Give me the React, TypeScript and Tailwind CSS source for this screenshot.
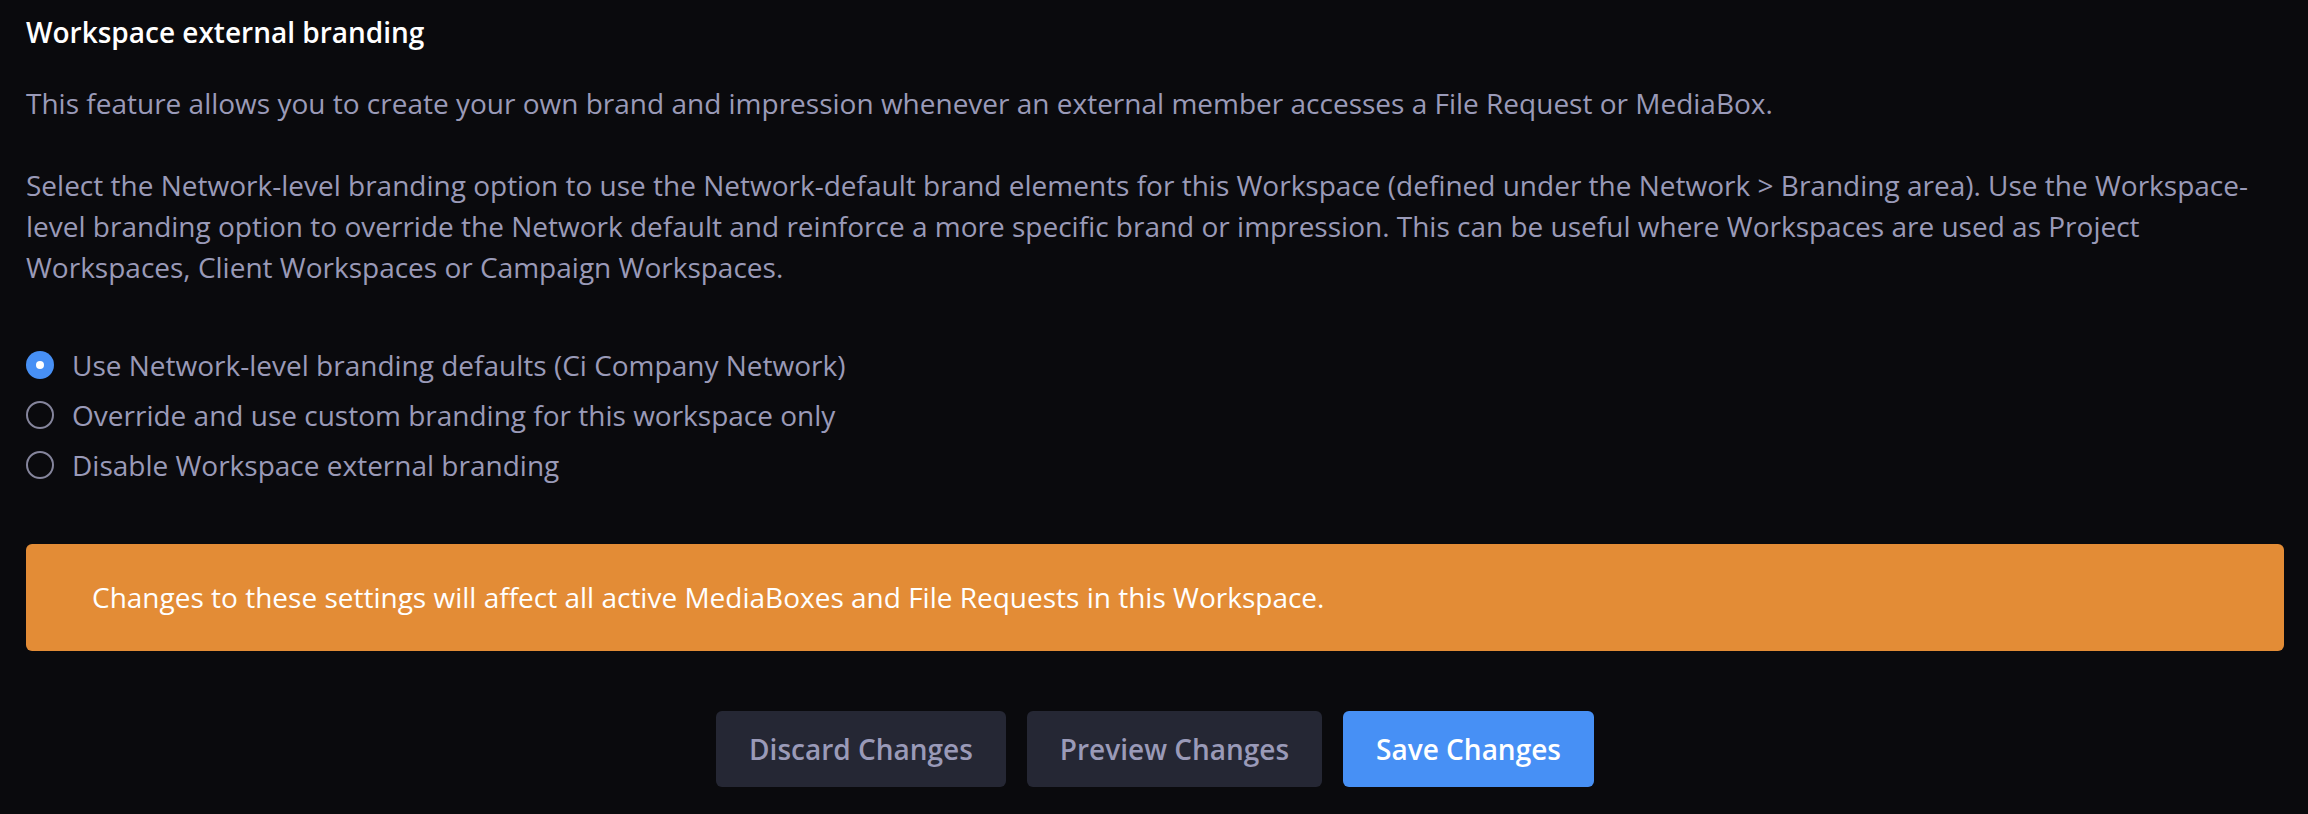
const options = [
  { label: "Use Network-level branding defaults (Ci Company Network)", checked: true },
  { label: "Override and use custom branding for this workspace only", checked: false },
  { label: "Disable Workspace external branding", checked: false },
];

function Radio({ checked }: { checked: boolean }) {
  if (checked) {
    return (
      <span className="flex h-[28px] w-[28px] shrink-0 items-center justify-center rounded-full bg-[#4790f5]">
        <span className="h-[8px] w-[8px] rounded-full bg-white" />
      </span>
    );
  }
  return <span className="h-[28px] w-[28px] shrink-0 rounded-full border-2 border-[#85859c]" />;
}

export default function App() {
  return (
    <div className="min-h-screen bg-[#0a0a0d] pl-[26px] pr-[24px] pt-[12px] pb-[26px] font-['Open_Sans',sans-serif] text-[28px] leading-[41px] text-[#9a9ab8]">
      <h2 className="font-semibold text-white">Workspace external branding</h2>

      <p className="mt-[30px]">
        This feature allows you to create your own brand and impression whenever an external member accesses a File
        Request or MediaBox.
      </p>

      <p className="mt-[41px]">
        Select the Network-level branding option to use the Network-default brand elements for this Workspace (defined
        under the Network &gt; Branding area). Use the Workspace-level branding option to override the Network default
        and reinforce a more specific brand or impression. This can be useful where Workspaces are used as Project
        Workspaces, Client Workspaces or Campaign Workspaces.
      </p>

      <div className="mt-[52px] flex flex-col">
        {options.map((o) => (
          <label key={o.label} className="flex h-[50px] items-center gap-[18px]">
            <Radio checked={o.checked} />
            <span>{o.label}</span>
          </label>
        ))}
      </div>

      <div className="mt-[54px] rounded-[6px] bg-[#e38c36] px-[66px] py-[33px] text-white">
        Changes to these settings will affect all active MediaBoxes and File Requests in this Workspace.
      </div>

      <div className="mt-[60px] flex justify-center gap-[21px] font-semibold">
        <button className="h-[76px] rounded-[6px] bg-[#252734] px-[33px] text-[#9a9ab8]">Discard Changes</button>
        <button className="h-[76px] rounded-[6px] bg-[#252734] px-[33px] text-[#9a9ab8]">Preview Changes</button>
        <button className="h-[76px] rounded-[6px] bg-[#4790f5] px-[33px] text-white">Save Changes</button>
      </div>
    </div>
  );
}
